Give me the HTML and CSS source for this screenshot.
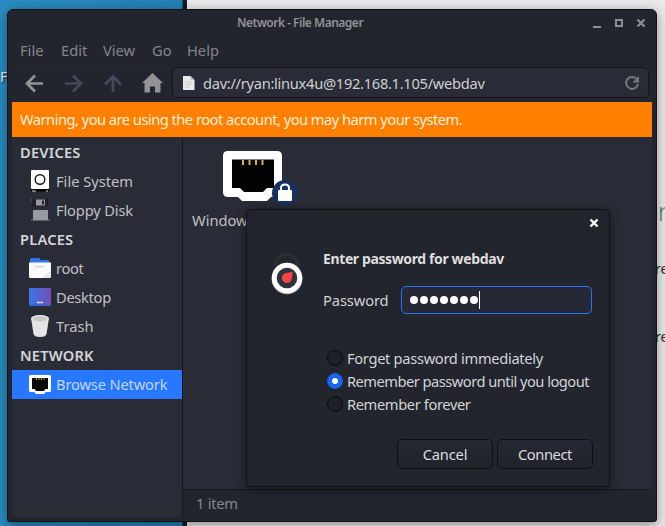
FILE: index.html
```html
<!DOCTYPE html>
<html lang="en">
<head>
<meta charset="utf-8">
<title>Network - File Manager</title>
<link rel="stylesheet" href="styles.css">
</head>
<body>
<div class="desktop">
  <div class="wallpaper"><span class="desktop-label">F</span></div>
  <div class="browser">
    <span class="frag frag-title">n</span>
    <span class="frag frag-a">re</span>
    <span class="frag frag-b">re</span>
  </div>

  <main class="window">
    <header class="titlebar">
      <span class="title">Network - File Manager</span>
      <svg class="controls" width="54" height="12" viewBox="0 0 54 12">
        <path d="M1 9h8" stroke="#8d8e94" stroke-width="2"/>
        <rect x="24" y="2" width="6" height="6" fill="none" stroke="#8d8e94" stroke-width="2"/>
        <path d="M45.500 1.500l7 7M52.500 1.500l-7 7" stroke="#8d8e94" stroke-width="2.200"/>
      </svg>
    </header>
    <nav class="menubar"><span class="m-file">File</span><span class="m-edit">Edit</span><span class="m-view">View</span><span class="m-go">Go</span><span class="m-help">Help</span></nav>
    <div class="toolbar">
      <svg class="nav-icons" width="144" height="24" viewBox="0 0 144 24">
        <g fill="none" stroke-width="2.700">
          <path d="M32 12.500H17M24 4.500l-8 8 8 8" stroke="#929296"/>
          <path d="M54 12.500h15M62 4.500l8 8-8 8" stroke="#45475a"/>
          <path d="M102 21V6M94 13.500l8-8 8 8" stroke="#45475a"/>
        </g>
        <path d="M141.500 2l10.500 10h-2.500v9.500h-5.500v-6h-5v6h-5.500V12H131z" fill="#929296"/>
      </svg>
      <div class="address">
        <svg class="page-icon" width="12" height="14" viewBox="0 0 12 14"><path d="M0 0h7.500l4 4v10H0z" fill="#e9e9e9"/><path d="M7.500 0v4h4" fill="#bbb"/><path d="M2 6h7M2 8.500h7M2 11h5" stroke="#cecece"/></svg>
        <span class="url">dav://ryan:linux4u@192.168.1.105/webdav</span>
        <svg class="reload" width="16" height="16" viewBox="0 0 16 16"><path d="M12.500 3.800A6 6 0 1 0 14 9" fill="none" stroke="#77787f" stroke-width="2"/><path d="M15 1v6.500H8.500z" fill="#77787f"/></svg>
      </div>
    </div>
    <div class="warning"><span>Warning, you are using the root account, you may harm your system.</span></div>
    <div class="body">
      <aside class="sidebar">
        <h2>DEVICES</h2>
        <div class="row"><svg width="24" height="24" viewBox="0 0 24 24"><path d="M3 20h18v2.500H3z" fill="#050505"/><rect x="3" y="1" width="18" height="19" rx="1" fill="#fff"/><circle cx="12" cy="10.500" r="4.800" fill="#fff" stroke="#15161a" stroke-width="1.400"/><path d="M4 22h4M18 22h2" stroke="#ddd"/></svg><span class="t-fs">File System</span></div>
        <div class="row"><svg width="24" height="24" viewBox="0 0 24 24"><path d="M4 1h16v7H4z" fill="#202126"/><path d="M8 1.500h9v6H8z" fill="#999aa0"/><path d="M14 2.500h2v4h-2z" fill="#25262c"/><rect x="5" y="12" width="15" height="10.500" rx="1" fill="#999aa0"/><path d="M3 2h1M3 22h2M20 22h2" stroke="#888"/></svg><span class="t-fd">Floppy Disk</span></div>
        <h2>PLACES</h2>
        <div class="row"><svg width="24" height="24" viewBox="0 0 24 24"><path d="M2 3.500Q2 2 3.500 2H11l2 2h8v6H2z" fill="#3274e8"/><path d="M1 6.500h22v13.500Q23 22 21.500 22h-19Q1 22 1 20.500z" fill="#fafafa"/><path d="M14 22l9-8v7l-1 1z" fill="#e9e9e9"/><path d="M7 10.700h9" stroke="#c8c8c8"/></svg><span class="t-root">root</span></div>
        <div class="row"><svg width="24" height="24" viewBox="0 0 24 24"><defs><linearGradient id="desk"><stop stop-color="#3677e6"/><stop offset="1" stop-color="#7550b4"/></linearGradient></defs><rect x="1" y="3" width="22" height="18" rx="1" fill="url(#desk)"/><path d="M1 20h22" stroke="#285fc5"/><path d="M9 17.500h6" stroke="#fff" stroke-width="1.500" stroke-dasharray="1.500 .7"/></svg><span class="t-desk">Desktop</span></div>
        <div class="row"><svg width="24" height="24" viewBox="0 0 24 24"><path d="M3 4l2.500 16q.5 3 6.500 3t6.500-3L21 4z" fill="#e4e4e4"/><ellipse cx="12" cy="4.500" rx="9" ry="3.500" fill="#ececec"/><ellipse cx="12" cy="5" rx="7.500" ry="2.700" fill="#c9c9c9"/></svg><span class="t-trash">Trash</span></div>
        <h2>NETWORK</h2>
        <div class="row selected"><svg width="24" height="24" viewBox="0 0 24 24"><path d="M2.500 3h19Q23 3 23 4.500v14q0 1.500-1.500 1.500H18l-2 2H8l-2-2H2.500Q1 20 1 18.500v-14Q1 3 2.500 3z" fill="#fff"/><path d="M4 6h16v11h-2.500L16 19H8l-1.500-2H4z" fill="#090909"/><path d="M8.500 6v2M11 6v2M13.500 6v2M16 6v2" stroke="#bd9d35"/></svg><span class="t-bn">Browse Network</span></div>
      </aside>
      <section class="content">
        <div class="files">
          <div class="file">
            <svg width="76" height="60" viewBox="0 0 76 60">
              <path d="M5 5h49q5 0 5 5v37q0 4-4 4h-7l-4 4H19l-4-4H5q-5 0-5-5V10q0-5 5-5z" fill="#fff"/>
              <path d="M9 13.500h42V42h-7l-4 4H21l-4-4H9z" fill="#020202"/>
              <path d="M20 14v5M26.500 14v5M33 14v5M39.500 14v5" stroke="#dcac46" stroke-width="2"/>
              <circle cx="62" cy="47" r="13" fill="#17315e"/>
              <rect x="55" y="44" width="14" height="11" rx="1" fill="#fff"/><path d="M58 44v-2q0-3.500 4-3.500t4 3.500v2" fill="none" stroke="#fff" stroke-width="2"/>
            </svg>
            <span class="file-name">Windows Network</span>
          </div>
        </div>
        <footer class="status"><span>1 item</span></footer>
      </section>
    </div>
  </main>

  <form class="dialog">
    <div class="dialog-bar"><svg width="10" height="10" viewBox="0 0 10 10"><path d="M1.500 1.500l7 7M8.500 1.500l-7 7" stroke="#fff" stroke-width="2.400"/></svg></div>
    <div class="dialog-body">
      <svg class="lock" width="32" height="44" viewBox="0 0 32 44"><path d="M5 17v-3a11 11 0 0 1 22 0v3" fill="none" stroke="#2c2e37" stroke-width="3"/><circle cx="16" cy="28" r="15.300" fill="#b5b5b5"/><circle cx="16" cy="27" r="15.300" fill="#fff"/><circle cx="16" cy="27" r="10.300" fill="#30323d"/><path d="M21.800 20.800l-1 6.600a5 5 0 1 1-5.400-5.400z" fill="#fb4544"/></svg>
      <div class="fields">
        <h1><span>Enter password for webdav</span></h1>
        <div class="password"><label>Password</label><div class="input"><i></i><i></i><i></i><i></i><i></i><i></i><i></i><b></b></div></div>
        <div class="options">
          <div class="option"><span class="radio"></span><span class="o-a">Forget password immediately</span></div>
          <div class="option"><span class="radio on"></span><span class="o-b">Remember password until you logout</span></div>
          <div class="option"><span class="radio"></span><span class="o-c">Remember forever</span></div>
        </div>
      </div>
    </div>
    <div class="actions"><button type="button">Cancel</button><button type="button" class="connect">Connect</button></div>
  </form>
</div>
</body>
</html>
```
FILE: styles.css
```css
* { box-sizing: border-box; }
body { margin: 0; font: 14.67px/20px "Noto Sans", sans-serif; color: #d0d1d3; }
svg { display: block; flex: none; }
span, label { white-space: nowrap; }
.desktop { position: relative; width: 665px; height: 526px; overflow: hidden; display: flex; background: #ededee; }
.wallpaper { width: 183px; background: linear-gradient(90deg, #2b8bc0, #2380b4); border-right: 1px solid #14516f; padding-top: 66px; }
.desktop-label { color: #e4f2fa; font-size: 14px; text-shadow: 1px 1px 1px #10212c; }
.browser { position: relative; flex: 1; border-left: 4px solid #171a22; background: #e9e9eb; }
.frag { position: absolute; color: #292929; font-size: 14px; }
.frag-title { left: 471px; top: 197px; font: 300 26px/28px "Open Sans", sans-serif; color: #666; }
.frag-a { left: 468px; top: 259px; }
.frag-b { left: 468px; top: 327px; }

.window { position: absolute; left: 7px; top: 9px; width: 650px; height: 513px; border: 1px solid #101218; border-radius: 6px 6px 3px 3px; background: #22252e; padding: 0 4px; display: flex; flex-direction: column; box-shadow: 0 3px 12px rgba(0,0,0,.4); }
.titlebar { height: 27px; display: flex; align-items: center; justify-content: flex-end; padding-right: 6px; }
.title { font-size: 12px; font-weight: 600; letter-spacing: -.5px; color: #909196; width: 127px; margin: -1px 228px 0 0; }
.menubar { height: 27px; display: flex; align-items: center; color: #84858b; padding: 0 0 2px 8px; }
.m-file { width: 41px; }
.m-edit { width: 42px; }
.m-view { width: 49px; }
.m-go { width: 35px; }
.toolbar { height: 38px; display: flex; align-items: center; border-top: 1px solid #1f222a; padding-bottom: 2px; }
.nav-icons { overflow: visible; margin: 0 17px 0 -1px; }
.address { flex: 1; height: 31px; margin-right: 3px; border: 1px solid #13151b; border-radius: 5px; background: #292c36; display: flex; align-items: center; padding: 0 8px 0 10px; }
.url { margin-left: 8px; flex: 1; color: #cfd0d2; letter-spacing: -.29px; }
.warning { height: 36px; background: #ff8000; color: #fff0d8; border-bottom: 1px solid #302a28; padding: 7px 8px 0; letter-spacing: -.51px; }
.body { flex: 1; min-height: 0; display: flex; }
.sidebar { width: 171px; height: 379px; background: #292c36; border-right: 1px solid #14161d; }
.sidebar h2 { margin: 0; height: 29px; padding-left: 8px; font-size: 14.67px; line-height: 29px; font-weight: 600; letter-spacing: .2px; color: #d4d5d7; }
.row { height: 29px; display: flex; align-items: center; padding-left: 16px; gap: 4px; color: #c0c1c4; }
.row span { margin-top: -2px; }
.row svg { margin-top: -1px; }
.t-fd, .t-bn { letter-spacing: -.15px; }
.t-desk, .t-root { letter-spacing: -.3px; }
.selected { background: #2777ff; color: #c0d7ff; }
.content { flex: 1; display: flex; flex-direction: column; }
.files { height: 351px; background: #292c36; padding: 8px 0 0 8px; }
.file { width: 110px; padding-left: 32px; }
.file-name { display: block; margin: 4px 0 0 -31px; color: #c0c1c4; }
.status { height: 32px; border-top: 1px solid #15171e; padding: 3px 13px; color: #87888c; letter-spacing: -.25px; }

.dialog { position: absolute; left: 246px; top: 209px; width: 364px; height: 278px; border: 1px solid #101218; border-radius: 5px 5px 2px 2px; background: #22252e; display: flex; flex-direction: column; box-shadow: 0 2px 11px rgba(0,0,0,.5); }
.dialog-bar { height: 37px; display: flex; justify-content: flex-end; padding: 8px 10px 0 0; }
.dialog-body { display: flex; padding-left: 24px; }
.lock { margin-top: 4px; }
.fields { flex: 1; padding-left: 20px; }
.fields h1 { margin: 2px 0 17px; height: 20px; font-size: 14px; line-height: 20px; font-weight: 700; letter-spacing: -.38px; color: #dedede; }
.password { display: flex; align-items: center; gap: 12px; height: 28px; }
.password label { letter-spacing: -.1px; margin-top: -1px; }
.input { width: 191px; height: 28px; border: 1px solid #2673ff; border-radius: 5px; background: #262935; display: flex; align-items: center; padding-left: 8px; gap: 2px; }
.input i { width: 8px; height: 8px; border-radius: 50%; background: #fff; }
.input b { width: 1px; height: 18px; background: #fff; margin-left: -1px; }
.options { margin: 32px 0 0 4px; }
.option { height: 23px; display: flex; align-items: center; gap: 4px; color: #d3d4d6; }
.o-a { letter-spacing: -.31px; }
.o-b { letter-spacing: -.51px; }
.o-c { letter-spacing: -.38px; }
.radio { width: 16px; height: 16px; border: 1px solid #08090c; border-radius: 50%; background: #1d2027; }
.radio.on { border-color: #1a60e8; background: radial-gradient(circle, #fff 0 2.700px, #1966f5 3.300px); }
.actions { display: flex; justify-content: flex-end; gap: 4px; padding: 24px 16px 0 0; }
button { width: 96px; height: 30px; padding: 0 0 1px; border: 1px solid #0e1015; border-radius: 5px; background: linear-gradient(#252832, #20232b); color: #dcdcdd; font: inherit; letter-spacing: -.15px; }
.connect { letter-spacing: -.4px; }
```
